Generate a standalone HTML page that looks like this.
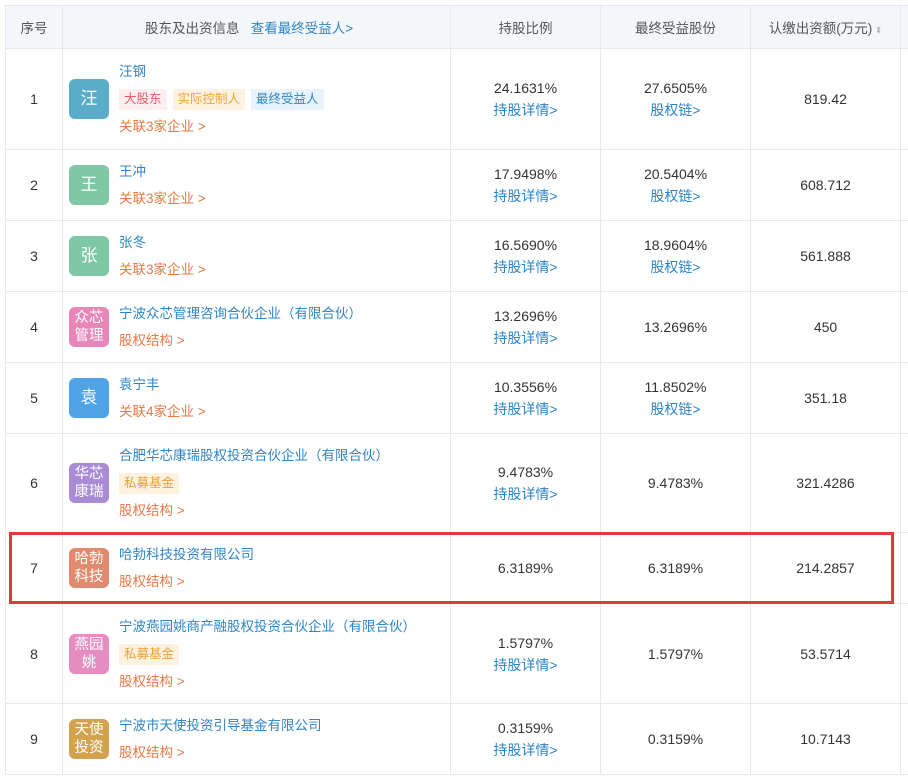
<!DOCTYPE html>
<html><head><meta charset="utf-8"><style>
*{margin:0;padding:0;box-sizing:border-box}
body{width:908px;height:778px;background:#fff;font-family:"Liberation Sans","Noto Sans CJK SC",sans-serif;font-size:14px;color:#333;position:relative;overflow:hidden}
table{position:absolute;left:5px;top:5px;border-collapse:collapse;table-layout:fixed;width:903px}
td,th{border:1px solid #e6eaee;text-align:center;vertical-align:middle}
th{background:#f3f7fa;font-weight:normal;color:#555;height:43px;font-size:13.5px}
.nm{text-align:left;padding-left:6px;font-size:13.5px}
.f{display:flex;align-items:center}
.av{width:40px;height:40px;border-radius:6px;color:#fff;display:flex;align-items:center;justify-content:center;font-size:17px;flex:none;margin-right:10px;line-height:18px;text-align:center}
.av.s{font-size:14.5px;padding:0 5px}
.b{color:#2f85c6}
.o{color:#e47a46}
.l{line-height:27px}
.tag{display:inline-block;font-size:12.5px;line-height:21px;padding:0 5px;margin:3px 6px 3px 0}
.v{line-height:22px}
.red{position:absolute;left:9px;top:532px;width:885px;height:72px;border:3px solid #df3b3f}
</style></head><body>
<table>
<colgroup><col style="width:57px"><col style="width:388px"><col style="width:150px"><col style="width:150px"><col style="width:150px"><col style="width:8px"></colgroup>
<tr><th>序号</th><th style="text-align:left;padding-left:82px">股东及出资信息 &nbsp;&nbsp;<span class="b">查看最终受益人&gt;</span></th><th>持股比例</th><th>最终受益股份</th><th>认缴出资额(万元)<span style="color:#bbb;font-size:9px"> ⬍</span></th><th></th></tr>

<tr style="height:101px"><td>1</td><td class="nm"><div class="f"><div class="av" style="background:#5bacc8">汪</div><div class="l"><div class="b">汪钢</div><div><span class="tag" style="background:#fdeef0;color:#e85a6a">大股东</span><span class="tag" style="background:#fdf2e0;color:#f0a33a">实际控制人</span><span class="tag" style="background:#e9f3fc;color:#2f85c6">最终受益人</span></div><div class="o">关联3家企业 &gt;</div></div></div></td><td class="v">24.1631%<br><span class="b">持股详情&gt;</span></td><td class="v">27.6505%<br><span class="b">股权链&gt;</span></td><td>819.42</td><td></td></tr>

<tr style="height:71px"><td>2</td><td class="nm"><div class="f"><div class="av" style="background:#7ec8a5">王</div><div class="l"><div class="b">王冲</div><div class="o">关联3家企业 &gt;</div></div></div></td><td class="v">17.9498%<br><span class="b">持股详情&gt;</span></td><td class="v">20.5404%<br><span class="b">股权链&gt;</span></td><td>608.712</td><td></td></tr>

<tr style="height:71px"><td>3</td><td class="nm"><div class="f"><div class="av" style="background:#7ec8a5">张</div><div class="l"><div class="b">张冬</div><div class="o">关联3家企业 &gt;</div></div></div></td><td class="v">16.5690%<br><span class="b">持股详情&gt;</span></td><td class="v">18.9604%<br><span class="b">股权链&gt;</span></td><td>561.888</td><td></td></tr>

<tr style="height:71px"><td>4</td><td class="nm"><div class="f"><div class="av s" style="background:#e886b8">众芯管理</div><div class="l"><div class="b">宁波众芯管理咨询合伙企业（有限合伙）</div><div class="o">股权结构 &gt;</div></div></div></td><td class="v">13.2696%<br><span class="b">持股详情&gt;</span></td><td>13.2696%</td><td>450</td><td></td></tr>

<tr style="height:71px"><td>5</td><td class="nm"><div class="f"><div class="av" style="background:#4fa3e6">袁</div><div class="l"><div class="b">袁宁丰</div><div class="o">关联4家企业 &gt;</div></div></div></td><td class="v">10.3556%<br><span class="b">持股详情&gt;</span></td><td class="v">11.8502%<br><span class="b">股权链&gt;</span></td><td>351.18</td><td></td></tr>

<tr style="height:99px"><td>6</td><td class="nm"><div class="f"><div class="av s" style="background:#a98bd6">华芯康瑞</div><div class="l"><div class="b">合肥华芯康瑞股权投资合伙企业（有限合伙）</div><div><span class="tag" style="background:#fdf2e0;color:#e8a23a">私募基金</span></div><div class="o">股权结构 &gt;</div></div></div></td><td class="v">9.4783%<br><span class="b">持股详情&gt;</span></td><td>9.4783%</td><td>321.4286</td><td></td></tr>

<tr style="height:71px"><td>7</td><td class="nm"><div class="f"><div class="av s" style="background:#e08a6e">哈勃科技</div><div class="l"><div class="b">哈勃科技投资有限公司</div><div class="o">股权结构 &gt;</div></div></div></td><td>6.3189%</td><td>6.3189%</td><td>214.2857</td><td></td></tr>

<tr style="height:100px"><td>8</td><td class="nm"><div class="f"><div class="av s" style="background:#e68cc0">燕园姚</div><div class="l"><div class="b">宁波燕园姚商产融股权投资合伙企业（有限合伙）</div><div><span class="tag" style="background:#fdf2e0;color:#e8a23a">私募基金</span></div><div class="o">股权结构 &gt;</div></div></div></td><td class="v">1.5797%<br><span class="b">持股详情&gt;</span></td><td>1.5797%</td><td>53.5714</td><td></td></tr>

<tr style="height:71px"><td>9</td><td class="nm"><div class="f"><div class="av s" style="background:#d3a24f">天使投资</div><div class="l"><div class="b">宁波市天使投资引导基金有限公司</div><div class="o">股权结构 &gt;</div></div></div></td><td class="v">0.3159%<br><span class="b">持股详情&gt;</span></td><td>0.3159%</td><td>10.7143</td><td></td></tr>
</table>
<div class="red"></div>
</body></html>
